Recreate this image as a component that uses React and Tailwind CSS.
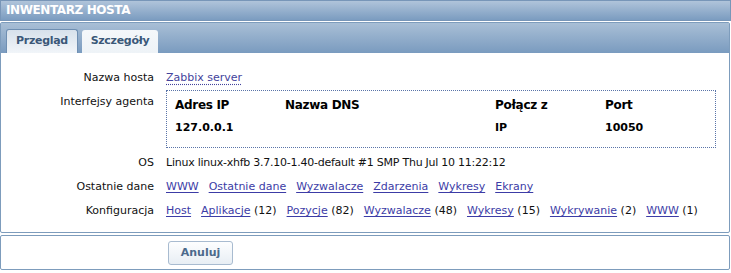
import React from 'react';

const linkCls = 'text-[#3c3ca6] underline underline-offset-2';

const Row = ({ label, children, className = '' }) => (
  <div className={`flex items-start ${className}`}>
    <div className="w-[153px] shrink-0 text-right leading-[24px] text-[#111]">{label}</div>
    <div className="ml-[12px] leading-[24px] text-[#111]">{children}</div>
  </div>
);

const LinkList = ({ items }) => (
  <div className="flex gap-[10px]">
    {items.map(([name, count]) => (
      <span key={name}>
        <span className={linkCls}>{name}</span>
        {count !== undefined && <span> ({count})</span>}
      </span>
    ))}
  </div>
);

export default function App() {
  return (
    <div className="w-[731px] h-[273px] bg-white text-[11px] font-['DejaVu_Sans',sans-serif]">
      {/* Title bar */}
      <div className="h-[21px] w-[731px] border border-[#7896b8] bg-gradient-to-b from-[#b0c4da] to-[#7b9cc0] pl-[5px] text-[12px] font-bold leading-[19px] tracking-[-0.4px] text-white">
        INWENTARZ HOSTA
      </div>

      {/* Main panel */}
      <div className="mt-[1px] w-[730px] border border-[#7d9cbc] rounded-[2px]">
        <div className="flex h-[30px] items-end gap-[4px] bg-gradient-to-b from-[#a9bfd6] to-[#7a9bbf] px-[5px]">
          <div className="flex h-[24px] w-[72px] items-center justify-center rounded-t-[3px] border border-b-0 border-[#6f8fb2] bg-gradient-to-b from-[#d7e1eb] to-[#f1f5f9] text-[11px] font-bold tracking-[-0.3px] text-[#3b5878]">
            Przegląd
          </div>
          <div className="flex h-[23px] w-[76px] items-center justify-center rounded-t-[3px] bg-gradient-to-b from-[#f4f7fa] to-[#eef3f7] text-[11px] font-bold tracking-[-0.3px] text-[#3b5878]">
            Szczegóły
          </div>
        </div>

        <div className="pt-[13px] pb-[9px]">
          <Row label="Nazwa hosta">
            <span className="text-[#43439c] underline decoration-dotted underline-offset-[3px]">Zabbix server</span>
          </Row>

          <Row label="Interfejsy agenta" className="mb-[3px]">
            <div className="h-[58px] w-[550px] border border-dotted border-[#5a74a8] pl-[8px] pt-[2px] font-bold text-black">
              <div className="flex leading-[24px]">
                <div className="w-[110px] text-[12px] tracking-[-0.3px]">Adres IP</div>
                <div className="w-[210px] text-[12px] tracking-[-0.3px]">Nazwa DNS</div>
                <div className="w-[110px] text-[12px] tracking-[-0.3px]">Połącz z</div>
                <div className="text-[12px] tracking-[-0.3px]">Port</div>
              </div>
              <div className="flex leading-[22px]">
                <div className="w-[110px]">127.0.0.1</div>
                <div className="w-[210px]"></div>
                <div className="w-[110px]">IP</div>
                <div>10050</div>
              </div>
            </div>
          </Row>

          <Row label="OS">
            <span className="tracking-[-0.25px]">Linux linux-xhfb 3.7.10-1.40-default #1 SMP Thu Jul 10 11:22:12</span>
          </Row>

          <Row label="Ostatnie dane">
            <LinkList items={[['WWW'], ['Ostatnie dane'], ['Wyzwalacze'], ['Zdarzenia'], ['Wykresy'], ['Ekrany']]} />
          </Row>

          <Row label="Konfiguracja">
            <LinkList
              items={[
                ['Host'],
                ['Aplikacje', 12],
                ['Pozycje', 82],
                ['Wyzwalacze', 48],
                ['Wykresy', 15],
                ['Wykrywanie', 2],
                ['WWW', 1],
              ]}
            />
          </Row>
        </div>
      </div>

      {/* Footer */}
      <div className="mt-[2px] h-[35px] w-[730px] border border-[#7d9cbc] rounded-[2px] pl-[167px] pt-[5px]">
        <button className="h-[24px] w-[65px] rounded-[3px] border border-[#a8bbd0] bg-gradient-to-b from-[#fdfeff] to-[#e8eef4] text-[11px] font-bold text-[#4c6a8c]">
          Anuluj
        </button>
      </div>
    </div>
  );
}
